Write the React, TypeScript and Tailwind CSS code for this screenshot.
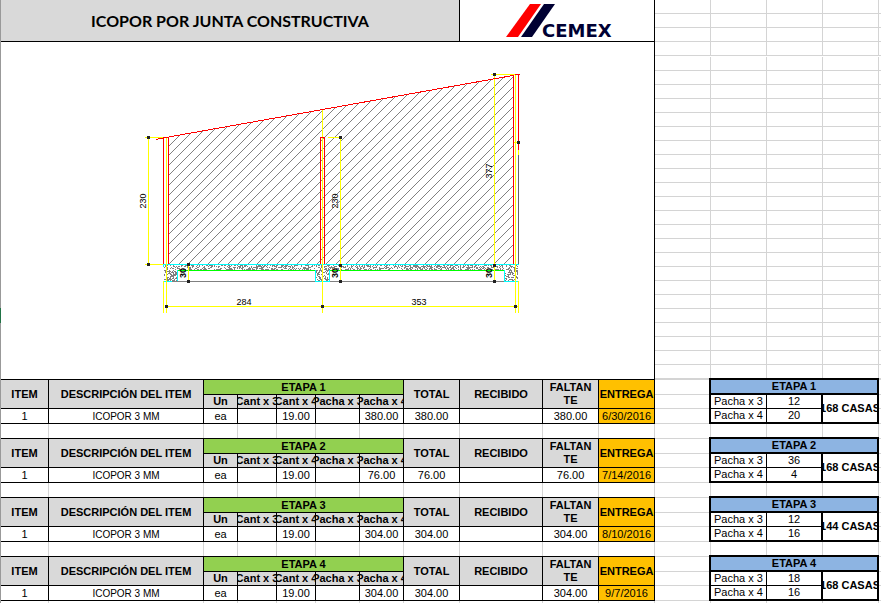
import React from "react";

const SANS = "font-['Liberation_Sans',Arial,sans-serif]";

type Stage = {
  id: number;
  total: string;
  date: string;
  pacha3: string;
  pacha4: string;
  houses: string;
};

const stages: Stage[] = [
  { id: 1, total: "380.00", date: "6/30/2016", pacha3: "12", pacha4: "20", houses: "168 CASAS" },
  { id: 2, total: "76.00", date: "7/14/2016", pacha3: "36", pacha4: "4", houses: "168 CASAS" },
  { id: 3, total: "304.00", date: "8/10/2016", pacha3: "12", pacha4: "16", houses: "144 CASAS" },
  { id: 4, total: "304.00", date: "9/7/2016", pacha3: "18", pacha4: "16", houses: "168 CASAS" },
];

const columnWidths = [48, 155, 34, 39, 39, 44, 44, 56, 83, 56, 56];

// Diagonal hatch of the wall panel, clipped to the roof line.
const hatch = Array.from({ length: 56 }, (_, i) => {
  const sum = Math.round(285 + i * 9.85);
  return `M${sum - 266} 266L${sum - 60} 60`;
}).join("");

// Speckled concrete fill for the slab and its footings.
function speckle(x0: number, y0: number, x1: number, y1: number) {
  let d = "";
  for (let y = y0; y < y1; y++) {
    for (let x = x0; x < x1; x++) {
      const n = Math.sin(x * 12.9898 + y * 78.233) * 43758.5453;
      if (n - Math.floor(n) < 0.45) d += `M${x} ${y}h1v1h-1z`;
    }
  }
  return d;
}

const concrete =
  speckle(164, 265, 177, 281) +
  speckle(177, 265, 315, 270) +
  speckle(316, 265, 329, 281) +
  speckle(329, 265, 504, 270) +
  speckle(505, 265, 518, 281);

const dots: [number, number][] = [
  [148, 137], [148, 264], [340, 137], [340, 265], [340, 281], [494, 74], [494, 265],
  [494, 281], [518, 142], [188, 264], [188, 281], [166, 306], [322, 306], [515, 306],
];

const verticalLabels: [number, number, string][] = [
  [146, 201, "230"],
  [338, 201, "230"],
  [492, 171, "377"],
  [186, 273, "30"],
  [338, 273, "30"],
  [492, 273, "30"],
];

function Drawing() {
  return (
    <svg viewBox="1 42 653 337" className="block w-full" role="img" aria-label="Junta constructiva">
      <defs>
        <clipPath id="panel">
          <path d="M169 137L513 76V264H169Z" />
        </clipPath>
      </defs>
      <g shapeRendering="crispEdges" fill="none" strokeWidth="1">
        <path d={hatch} stroke="#808080" clipPath="url(#panel)" />
        <path d={concrete} fill="#808080" />
        <path d="M163 281.5H519" stroke="#808080" />
        <path d="M518.5 155V265" stroke="#666666" />
        <path d="M177 270.5H315M329 270.5H504" stroke="#00ff00" />
        <path
          d="M163 264.5H519M163.5 264V267M177.5 270V281M163 281.5H172M315.5 270V281.5H329.5V270M504.5 270V281.5H518"
          stroke="#00ffff"
        />
        <path
          d="M148.5 137V265M145 137.5H163M145 264.5H163M166.5 137V313M163.5 281V313M322.5 109V313M328 137.5H342M340.5 137V282M491 74.5H515M494.5 74V282M515.5 75V313M518.5 281V313M188.5 264V282M166 306.5H519M514 142.5H518M518.5 149V155"
          stroke="#ffff00"
        />
        <path
          d="M156 139.5L163 138M163.5 264V137.5H168.5V264M320.5 264V137.5H324.5V264M513.5 75V264M515 74.5H520M518.5 74V150M163 138L513 75.5"
          stroke="#ff0000"
        />
        <path d="M322.5 138V264" stroke="#ffff00" />
        {dots.map(([x, y]) => (
          <rect key={`${x}-${y}`} x={x - 1} y={y - 1} width="3" height="3" fill="#222222" />
        ))}
      </g>
      <g fill="#000000" fontSize="9" textAnchor="middle" fontFamily="Liberation Sans, Arial, sans-serif">
        <text x="244" y="305">284</text>
        <text x="419" y="305">353</text>
        {verticalLabels.map(([x, y, label]) => (
          <text
            key={`${x}-${y}`}
            transform={`translate(${x} ${y}) rotate(-90)`}
            fontWeight={label === "30" ? 700 : 400}
          >
            {label}
          </text>
        ))}
      </g>
    </svg>
  );
}

function Logo() {
  return (
    <svg viewBox="0 0 110 36" className="h-9 w-[110px]" role="img" aria-label="CEMEX">
      <path d="M24 1H35L12 34H0Z" fill="#ff0000" />
      <path d="M38 1H49L26 34H15Z" fill="#000033" />
      <text x="36" y="34" fontSize="18" fontWeight="700" fontFamily="DejaVu Sans, sans-serif" fill="#000033">
        CEMEX
      </text>
    </svg>
  );
}

function Clipped({ children }: { children: React.ReactNode }) {
  return <div className="flex justify-center overflow-hidden whitespace-nowrap">{children}</div>;
}

const cell = "border-r border-b border-black p-0 text-center";
const head = `${cell} bg-[#d9d9d9] font-bold`;

function StageTable({ stage }: { stage: Stage }) {
  return (
    <table className="w-full table-fixed border-separate border-spacing-0 border-t border-black bg-white text-[11px] leading-[13px]">
      <colgroup>
        {columnWidths.map((width, i) => (
          <col key={i} style={{ width }} />
        ))}
      </colgroup>
      <thead>
        <tr className="h-[15px]">
          <th rowSpan={2} className={head}>ITEM</th>
          <th rowSpan={2} className={head}>DESCRIPCIÓN DEL ITEM</th>
          <th colSpan={5} className={`${cell} bg-[#92d050] font-bold`}>ETAPA {stage.id}</th>
          <th rowSpan={2} className={head}>TOTAL</th>
          <th rowSpan={2} className={head}>RECIBIDO</th>
          <th rowSpan={2} className={head}>FALTAN<br />TE</th>
          <th rowSpan={2} className={`${cell} bg-[#ffc000] font-bold`}>
            <Clipped>ENTREGA</Clipped>
          </th>
        </tr>
        <tr className="h-[14px]">
          <th className={head}>Un</th>
          <th className={head}><Clipped>Cant x 3</Clipped></th>
          <th className={head}><Clipped>Cant x 4</Clipped></th>
          <th className={head}><Clipped>Pacha x 3</Clipped></th>
          <th className={head}><Clipped>Pacha x 4</Clipped></th>
        </tr>
      </thead>
      <tbody>
        <tr className="h-[15px]">
          <td className={cell}>1</td>
          <td className={`${cell} text-[10px]`}>ICOPOR 3 MM</td>
          <td className={cell}>ea</td>
          <td className={cell}></td>
          <td className={cell}>19.00</td>
          <td className={cell}></td>
          <td className={cell}>{stage.total}</td>
          <td className={cell}>{stage.total}</td>
          <td className={cell}></td>
          <td className={cell}>{stage.total}</td>
          <td className={`${cell} bg-[#ffc000]`}>{stage.date}</td>
        </tr>
      </tbody>
    </table>
  );
}

function HousesTable({ stage }: { stage: Stage }) {
  return (
    <table className="-mt-px ml-[54px] w-[170px] table-fixed border-separate border-spacing-0 border-2 border-black bg-white text-center text-[11px] leading-[13px]">
      <colgroup>
        <col className="w-[56px]" />
        <col className="w-[56px]" />
        <col className="w-[54px]" />
      </colgroup>
      <thead>
        <tr className="h-[15px]">
          <th colSpan={3} className="border-b-2 border-black bg-[#8db4e2] p-0 font-bold">ETAPA {stage.id}</th>
        </tr>
      </thead>
      <tbody>
        <tr className="h-[14px]">
          <td className="border-r border-b border-black p-0">Pacha x 3</td>
          <td className="border-r-2 border-b border-black p-0">{stage.pacha3}</td>
          <td rowSpan={2} className="p-0 font-bold"><Clipped>{stage.houses}</Clipped></td>
        </tr>
        <tr className="h-[13px]">
          <td className="border-r border-black p-0">Pacha x 4</td>
          <td className="border-r-2 border-black p-0">{stage.pacha4}</td>
        </tr>
      </tbody>
    </table>
  );
}

const emptyCells =
  "bg-[linear-gradient(to_right,transparent_55px,#d4d4d4_55px),linear-gradient(to_bottom,transparent_13px,#d4d4d4_13px)] bg-[size:56px_14px]";
const stageCells =
  "bg-[linear-gradient(to_right,transparent_55px,#d4d4d4_55px),linear-gradient(to_bottom,#d4d4d4_1px,transparent_1px,transparent_15px,#d4d4d4_15px,#d4d4d4_16px,transparent_16px,transparent_29px,#d4d4d4_29px,#d4d4d4_30px,transparent_30px,transparent_44px,#d4d4d4_44px,#d4d4d4_45px,transparent_45px)] bg-[size:56px_59px]";

export default function App() {
  return (
    <div className={`flex h-screen overflow-hidden bg-white text-black ${SANS}`}>
      <div className="flex w-px shrink-0 flex-col">
        <div className="h-[308px] bg-[#999999]" />
        <div className="h-[15px] bg-[#217346]" />
        <div className="grow bg-[#999999]" />
      </div>
      <main className="min-w-0 grow">
        <div className="flex">
          <section className="w-[654px] shrink-0 border-r border-black">
            <header className="flex h-[42px] border-b border-black">
              <h1 className="flex grow items-center justify-center border-r border-black bg-[#d9d9d9] font-['Lato','Open_Sans',sans-serif] text-[16px] font-bold">
                ICOPOR POR JUNTA CONSTRUCTIVA
              </h1>
              <div className="flex w-[194px] justify-center pt-[3px] pl-2">
                <Logo />
              </div>
            </header>
            <Drawing />
          </section>
          <div className="flex grow flex-col">
            <div className={`h-[56px] ${emptyCells}`} />
            <div className={`mt-px grow ${emptyCells}`} />
          </div>
        </div>
        {stages.map((stage) => (
          <div key={stage.id} className="flex h-[59px]">
            <div className="flex w-[654px] shrink-0 flex-col">
              <StageTable stage={stage} />
              <div className="flex grow">
                {columnWidths.map((width, i) => (
                  <div key={i} className="border-r border-[#d4d4d4]" style={{ width }} />
                ))}
              </div>
            </div>
            <div className={`grow ${stageCells}`}>
              <HousesTable stage={stage} />
            </div>
          </div>
        ))}
      </main>
    </div>
  );
}
